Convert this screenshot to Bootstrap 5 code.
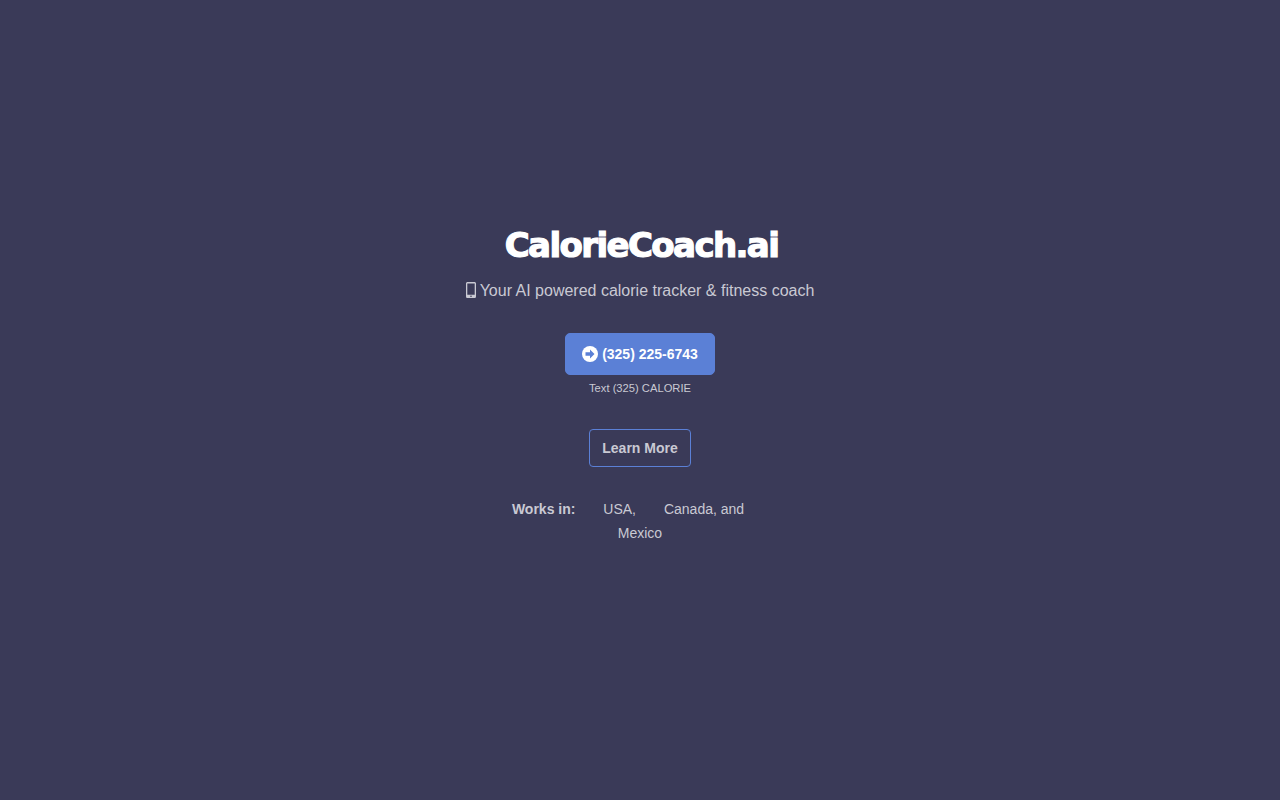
<!DOCTYPE html>
<html lang="en">
<head>
  <meta charset="UTF-8">
  <meta name="viewport" content="width=device-width, initial-scale=1.0">
  <title>CalorieCoach.ai</title>
  <link href="https://cdn.jsdelivr.net/npm/bootstrap@5.3.0/dist/css/bootstrap.min.css" rel="stylesheet">
  <style>
    body {
      background: #3a3a58;
      color: #c9c9d3;
      font-family: "Liberation Sans", Arial, sans-serif;
    }
    .page-wrap {
      min-height: 800px;
      padding-top: 222px;
      opacity: .999;
    }
    .brand-title {
      color: #fff;
      font-family: "DejaVu Sans", sans-serif;
      font-size: 34px;
      font-weight: 700;
      line-height: 46px;
      letter-spacing: -1.6px;
      -webkit-text-stroke: 1.2px #fff;
      margin-bottom: 11px;
      margin-left: 3px;
    }
    .tagline {
      font-size: 16px;
      line-height: 24px;
      margin-bottom: 30px;
    }
    .phone-glyph { margin-bottom: 2px; }
    .btn-phone {
      background: #5b80d6;
      border: 1px solid #5b80d6;
      color: #fff;
      font-size: 14px;
      font-weight: 700;
      line-height: 22px;
      padding: 9px 16px;
      border-radius: 5px;
    }
    .btn-phone:hover { background: #4f73c8; color: #fff; }
    .text-hint {
      font-size: 11.2px;
      line-height: 16px;
      margin-top: 5px;
      margin-bottom: 33px;
    }
    .btn-learn {
      background: transparent;
      border: 1px solid #5b80d6;
      color: #c9c9d3;
      font-size: 14px;
      font-weight: 700;
      line-height: 22px;
      padding: 7px 12px;
      border-radius: 4px;
    }
    .btn-learn:hover { color: #fff; }
    .works-list {
      width: 300px;
      font-size: 14px;
      line-height: 24px;
      margin-top: 30px;
    }
    .works-list .spaced { margin-right: 24px; }
  </style>
</head>
<body>
<div class="page-wrap d-flex flex-column align-items-center text-center">
  <h1 class="brand-title">CalorieCoach.ai</h1>
  <p class="tagline d-flex align-items-center gap-1">
    <svg class="phone-glyph" width="10" height="16" viewBox="0 0 10 16" fill="currentColor" aria-hidden="true">
      <path fill-rule="evenodd" d="M1.600 0h6.800C9.300 0 10 .7 10 1.600v12.800c0 .9-.7 1.600-1.600 1.600H1.600C.7 16 0 15.300 0 14.400V1.600C0 .7.7 0 1.600 0zM1.300 1.500v11.200h7.400V1.500z"/>
      <circle cx="5" cy="14.300" r=".8" fill="#3a3a58"/>
    </svg>
    <span>Your AI powered calorie tracker &amp; fitness coach</span>
  </p>
  <a href="#" class="btn btn-phone d-inline-flex align-items-center gap-1">
    <svg width="16" height="16" viewBox="0 0 16 16" aria-hidden="true">
      <circle cx="8" cy="8" r="8" fill="#fff"/>
      <path d="M8 3.600 12.500 8 8 12.400V9.800H3.500V6.200H8z" fill="#5b80d6"/>
    </svg>
    <span>(325) 225-6743</span>
  </a>
  <div class="text-hint">Text (325) CALORIE</div>
  <a href="#" class="btn btn-learn">Learn More</a>
  <div class="works-list">
    <span class="spaced d-inline-block fw-bold">Works in:</span>
    <span class="spaced d-inline-block">USA,</span>
    <span class="spaced d-inline-block">Canada, and</span>
    <span class="d-inline-block">Mexico</span>
  </div>
</div>
<script src="https://cdn.jsdelivr.net/npm/bootstrap@5.3.0/dist/js/bootstrap.bundle.min.js"></script>
</body>
</html>
